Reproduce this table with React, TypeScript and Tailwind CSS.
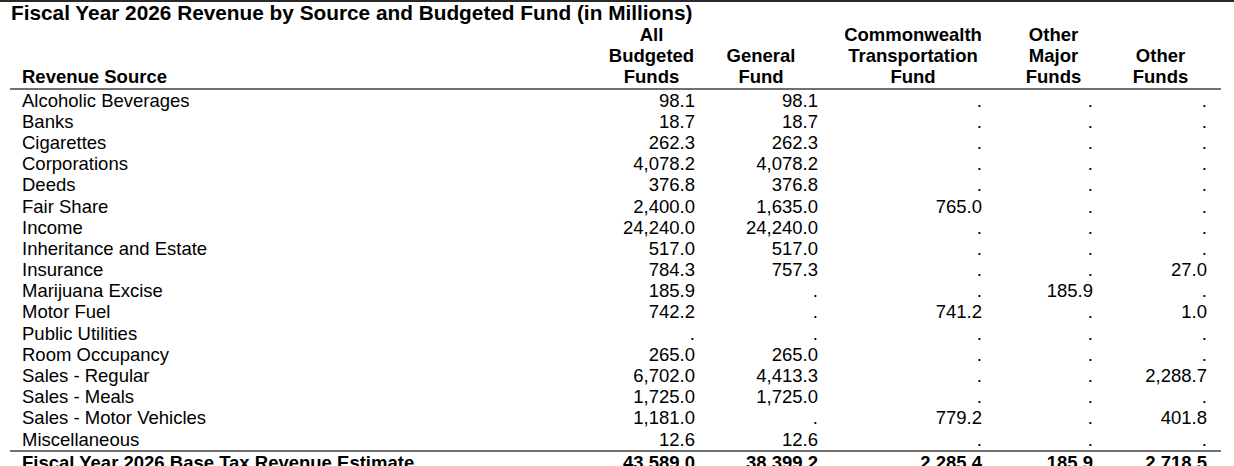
type Row = {
  source: string;
  values: string[];
};

const rows: Row[] = [
  { source: "Alcoholic Beverages", values: ["98.1", "98.1", ".", ".", "."] },
  { source: "Banks", values: ["18.7", "18.7", ".", ".", "."] },
  { source: "Cigarettes", values: ["262.3", "262.3", ".", ".", "."] },
  { source: "Corporations", values: ["4,078.2", "4,078.2", ".", ".", "."] },
  { source: "Deeds", values: ["376.8", "376.8", ".", ".", "."] },
  { source: "Fair Share", values: ["2,400.0", "1,635.0", "765.0", ".", "."] },
  { source: "Income", values: ["24,240.0", "24,240.0", ".", ".", "."] },
  { source: "Inheritance and Estate", values: ["517.0", "517.0", ".", ".", "."] },
  { source: "Insurance", values: ["784.3", "757.3", ".", ".", "27.0"] },
  { source: "Marijuana Excise", values: ["185.9", ".", ".", "185.9", "."] },
  { source: "Motor Fuel", values: ["742.2", ".", "741.2", ".", "1.0"] },
  { source: "Public Utilities", values: [".", ".", ".", ".", "."] },
  { source: "Room Occupancy", values: ["265.0", "265.0", ".", ".", "."] },
  { source: "Sales - Regular", values: ["6,702.0", "4,413.3", ".", ".", "2,288.7"] },
  { source: "Sales - Meals", values: ["1,725.0", "1,725.0", ".", ".", "."] },
  { source: "Sales - Motor Vehicles", values: ["1,181.0", ".", "779.2", ".", "401.8"] },
  { source: "Miscellaneous", values: ["12.6", "12.6", ".", ".", "."] },
];

const total: Row = {
  source: "Fiscal Year 2026 Base Tax Revenue Estimate",
  values: ["43,589.0", "38,399.2", "2,285.4", "185.9", "2,718.5"],
};

// right padding per fund column so the figures line up like the report
const numPad = ["pr-[8px]", "pr-[1px]", "pr-[25px]", "pr-[7px]", "pr-[14px]"];

const gridCols = "grid grid-cols-[590px_103px_116px_188px_93px_121px]";

const TableRow = ({ row, bold }: { row: Row; bold?: boolean }) => (
  <div className={`${gridCols} h-[21.2px] leading-[21.2px] ${bold ? "font-bold" : ""}`}>
    <div className="pl-[12px] whitespace-nowrap">{row.source}</div>
    {row.values.map((v, i) => (
      <div key={i} className={`text-right whitespace-nowrap ${numPad[i]}`}>
        {v}
      </div>
    ))}
  </div>
);

const App = () => {
  return (
    <div className="w-[1234px] h-[466px] overflow-hidden bg-white text-black font-['Liberation_Sans',Arial,sans-serif]">
      <div className="h-[2px] bg-[#2a2a2a]" />
      <h1 className="pl-[11px] text-[20.8px] font-bold leading-[22px] whitespace-nowrap">
        Fiscal Year 2026 Revenue by Source and Budgeted Fund (in Millions)
      </h1>

      <div className="ml-[10px] w-[1211px] text-[18.5px]">
        <div
          className={`${gridCols} items-end font-bold leading-[21.2px] border-b-2 border-[#707070]`}
        >
          <div className="pl-[12px]">Revenue Source</div>
          <div className="text-center">
            All
            <br />
            Budgeted
            <br />
            Funds
          </div>
          <div className="text-center">
            General
            <br />
            Fund
          </div>
          <div className="text-center">
            Commonwealth
            <br />
            Transportation
            <br />
            Fund
          </div>
          <div className="text-center">
            Other
            <br />
            Major
            <br />
            Funds
          </div>
          <div className="text-center">
            Other
            <br />
            Funds
          </div>
        </div>

        {rows.map((row) => (
          <TableRow key={row.source} row={row} />
        ))}

        <div className="border-t-2 border-[#707070]">
          <TableRow row={total} bold />
        </div>
      </div>
    </div>
  );
};

export default App;
